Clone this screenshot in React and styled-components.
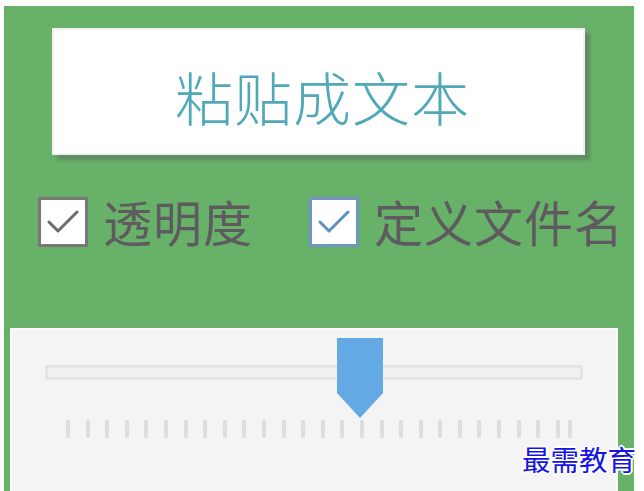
import React from "react";
import styled, { createGlobalStyle } from "styled-components";

const Global = createGlobalStyle`
  html, body { margin: 0; padding: 0; background: #ffffff; }
  body { font-family: "Noto Sans CJK SC", "Noto Sans", sans-serif; }
`;

const Page = styled.div`
  position: relative;
  width: 644px;
  height: 491px;
  overflow: hidden;
  background: #ffffff;
`;

const Frame = styled.div`
  margin: 6px 0 0 4px;
  width: 630px;
  height: 485px;
  background: #67b268;
  display: flex;
  flex-direction: column;
  overflow: hidden;
`;

const PasteButton = styled.div`
  margin: 22px 0 0 48px;
  width: 533px;
  height: 127px;
  box-sizing: border-box;
  background: #ffffff;
  border: 2px solid #f3f0f5;
  box-shadow: 5px 5px 3px rgba(90, 90, 90, 0.45);
  display: flex;
  align-items: center;
  justify-content: center;
  color: #4fa9b7;
  font-size: 58px;
  font-weight: 300;
  line-height: 1;
  letter-spacing: 1px;
  padding: 8px 0 0 8px;
`;

const CheckRow = styled.div`
  margin: 41px 0 0 34px;
  display: flex;
  align-items: center;
  height: 52px;
`;

const Check = styled.div`
  display: flex;
  align-items: center;
  gap: 15px;
  margin-right: ${(p) => p.$gap || 0}px;
`;

const Box = styled.div`
  width: 50px;
  height: 50px;
  box-sizing: border-box;
  background: #ffffff;
  border: 3px solid ${(p) => p.$color};
  display: flex;
  align-items: center;
  justify-content: center;
`;

const Label = styled.span`
  font-size: 49px;
  font-weight: 400;
  line-height: 1;
  color: #5e5a5f;
  letter-spacing: 1px;
  margin-top: -4px;
`;

const Panel = styled.div`
  margin: 80px 0 0 6px;
  width: 608px;
  flex: 1;
  box-sizing: border-box;
  background: #f4f4f4;
  border: 2px solid #fbfbfb;
  border-bottom: none;
  padding: 35px 0 0 33px;
  position: relative;
`;

const Track = styled.div`
  width: 538px;
  height: 15px;
  box-sizing: border-box;
  background: #f0f0f0;
  border: 3px solid #e4e4e4;
  border-radius: 2px;
`;

const Thumb = styled.svg`
  position: absolute;
  left: 324px;
  top: 7px;
`;

const TickArea = styled.div`
  margin: 40px 0 0 21px;
  display: flex;
  align-items: flex-start;
`;

const TickRow = styled.div`
  width: 494px;
  display: flex;
  justify-content: space-between;
`;

const Tick = styled.div`
  width: 4px;
  height: 18px;
  background: #dedede;
  border-radius: 1px;
  filter: blur(0.6px);
  margin-left: ${(p) => p.$ml || 0}px;
`;

const Watermark = styled.div`
  position: absolute;
  left: 522px;
  top: 445px;
  font-family: "Noto Sans CJK SC", serif;
  font-size: 28.5px;
  line-height: 1;
  color: #1414e6;
  text-shadow: -2px 0 #fff, 2px 0 #fff, 0 -2px #fff, 0 2px #fff,
    -1px -1px #fff, 1px 1px #fff, -1px 1px #fff, 1px -1px #fff;
`;

const CheckMark = ({ color }) => (
  <svg width="36" height="30" viewBox="0 0 36 30">
    <path
      d="M4 15 L13 24 L32 5"
      fill="none"
      stroke={color}
      strokeWidth="3"
      strokeLinecap="round"
      strokeLinejoin="round"
    />
  </svg>
);

export default function App() {
  const ticks = Array.from({ length: 26 });
  return (
    <Page>
      <Global />
      <Frame>
        <PasteButton>粘贴成文本</PasteButton>
        <CheckRow>
          <Check $gap={56}>
            <Box $color="#7a777b">
              <CheckMark color="#6e6b70" />
            </Box>
            <Label>透明度</Label>
          </Check>
          <Check>
            <Box $color="#7196c6">
              <CheckMark color="#5f90c2" />
            </Box>
            <Label>定义文件名</Label>
          </Check>
        </CheckRow>
        <Panel>
          <Track />
          <Thumb width="48" height="82" viewBox="0 0 48 82">
            <path d="M1 1 H47 V56 L24 81 L1 56 Z" fill="#63a9e3" />
          </Thumb>
          <TickArea>
            <TickRow>
              {ticks.map((_, i) => (
                <Tick key={i} />
              ))}
            </TickRow>
            <Tick $ml={8} />
          </TickArea>
        </Panel>
      </Frame>
      <Watermark>最需教育</Watermark>
    </Page>
  );
}
